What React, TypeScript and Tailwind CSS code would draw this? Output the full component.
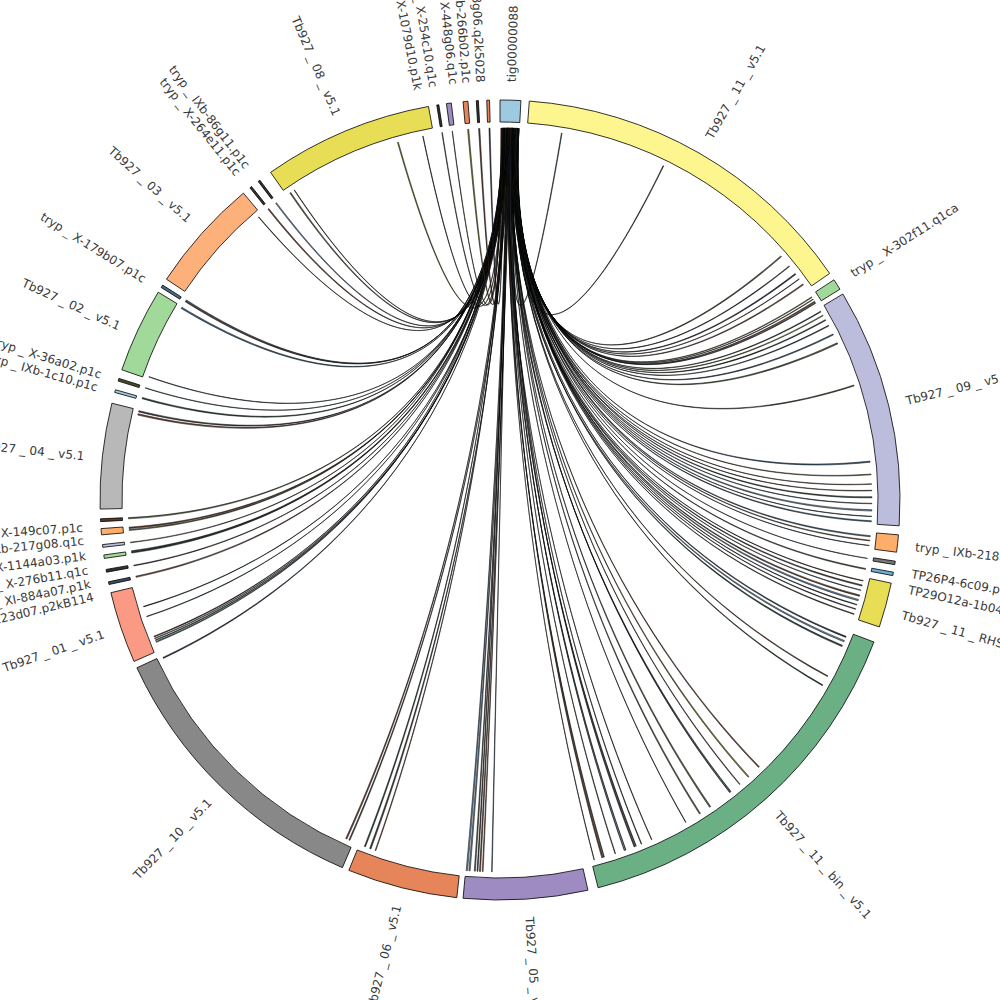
const CX = 500;
const CY = 500;
const R_IN = 378;
const R_OUT = 400;
const R_LINK = 372;
const R_LABEL = 418;

type P = [number, number];

const pt = (r: number, deg: number): P => {
  const a = (deg * Math.PI) / 180;
  return [CX + r * Math.sin(a), CY - r * Math.cos(a)];
};
const f = (p: P) => `${p[0].toFixed(2)} ${p[1].toFixed(2)}`;

function sector(a1: number, a2: number) {
  const large = a2 - a1 > 180 ? 1 : 0;
  return `M${f(pt(R_OUT, a1))} A${R_OUT} ${R_OUT} 0 ${large} 1 ${f(pt(R_OUT, a2))} L${f(pt(R_IN, a2))} A${R_IN} ${R_IN} 0 ${large} 0 ${f(pt(R_IN, a1))}Z`;
}

function ribbon(o: number, ow: number, t: number, tw: number) {
  const a1 = pt(R_LINK, o);
  const a2 = pt(R_LINK, o + ow);
  const b1 = pt(R_LINK, t);
  const b2 = pt(R_LINK, t + tw);
  const c1 = pt(R_LINK * 0.25, o);
  const c2 = pt(R_LINK * 0.5, t);
  const c3 = pt(R_LINK * 0.5, t + tw);
  const c4 = pt(R_LINK * 0.25, o + ow);
  return `M${f(a1)} C${f(c1)} ${f(c2)} ${f(b1)} L${f(b2)} C${f(c3)} ${f(c4)} ${f(a2)}Z`;
}

// ideograms: start, end, fill
const segments: [number, number, string][] = [
  [0, 3, "#9ecae1"],
  [4.2, 55.5, "#fdf68e"],
  [56.6, 58.2, "#a1d99b"],
  [59, 93.7, "#bcbddc"],
  [95, 97.5, "#fdae6b"],
  [98.8, 99.3, "#777777"],
  [100.4, 100.9, "#6baed6"],
  [102, 108.5, "#e8de55"],
  [110.8, 165.8, "#6baf84"],
  [167.3, 185.3, "#9d8bc2"],
  [186.2, 202.2, "#e6855a"],
  [203.2, 245.2, "#888888"],
  [246.2, 256.6, "#fb9a84"],
  [257.8, 258.2, "#3b4b6b"],
  [259.6, 260.0, "#333333"],
  [261.6, 262.1, "#a1d99b"],
  [263.2, 263.6, "#bcbddc"],
  [265.0, 265.9, "#fdae6b"],
  [266.9, 267.3, "#5a3a2a"],
  [268.7, 284.0, "#b8b8b8"],
  [285.6, 286.0, "#9ecae1"],
  [287.3, 287.7, "#4a4a2a"],
  [289.0, 301.3, "#a1d99b"],
  [302.1, 302.5, "#4a6a8a"],
  [303.5, 320.1, "#fdb07a"],
  [321.3, 321.6, "#333333"],
  [322.8, 323.1, "#333333"],
  [325, 349.7, "#e8de55"],
  [350.9, 351.2, "#333333"],
  [352.3, 353.0, "#9d8bc2"],
  [354.7, 355.4, "#e6855a"],
  [356.6, 356.9, "#333333"],
  [358.1, 358.5, "#e6855a"],
];

const labels: [number, string][] = [
  [1.6, "tig00000088"],
  [30, "Tb927_11_v5.1"],
  [57.3, "tryp_X-302f11.q1ca"],
  [76.3, "Tb927_09_v5.1"],
  [96.5, "tryp_IXb-218a05.p1c"],
  [100.2, "TP26P4-6c09.p1k"],
  [102.4, "TP29O12a-1b04.q1k"],
  [106, "Tb927_11_RHS_v5.1"],
  [138.5, "Tb927_11_bin_v5.1"],
  [176, "Tb927_05_v5.1"],
  [194.2, "Tb927_06_v5.1"],
  [224, "Tb927_10_v5.1"],
  [251.3, "Tb927_01_v5.1"],
  [256.6, "TP11-123d07.p2kB114"],
  [258.4, "tryp_XI-884a07.p1k"],
  [260.3, "tryp_X-276b11.q1c"],
  [262.3, "tryp_X-1144a03.p1k"],
  [264.4, "tryp_IXb-217g08.q1c"],
  [266.2, "tryp_X-149c07.p1c"],
  [276, "Tb927_04_v5.1"],
  [285.6, "tryp_IXb-1c10.p1c"],
  [287.4, "tryp_X-36a02.p1c"],
  [294.5, "Tb927_02_v5.1"],
  [301.8, "tryp_X-179b07.p1c"],
  [312, "Tb927_03_v5.1"],
  [321.2, "tryp_X-264e11.p1c"],
  [322.8, "tryp_IXb-86g11.p1c"],
  [337, "Tb927_08_v5.1"],
  [348.7, "tryp_X-1079d10.p1k"],
  [350.8, "tryp_X-254c10.q1c"],
  [353.6, "tryp_X-448g06.q1c"],
  [355.4, "tryp_IXb-266b02.p1c"],
  [357.3, "tryp_IXb-8g06.q2k5028"],
];

// chord target angles, all starting from tig00000088
const targets = [
  9.5, 26, 49, 51, 52.5, 53.5, 54.5,
  56.9, 57.3, 57.7, 58.0,
  59.5, 60.2, 61, 62, 63.5, 65, 72, 84, 86, 87.5, 88.5, 89.5, 90.5, 91.5, 92.5, 93.2,
  95.5, 96.2, 97,
  99, 100.6,
  102.5, 103.2, 104, 104.8, 105.5, 106.3, 107, 107.8,
  111.5, 112.2, 113, 118.2, 119.8, 135.8, 138, 139.8, 141.6, 141.8, 145.5, 147.4, 150,
  155.9, 157.6, 158.5, 158.7, 160.2, 160.4, 161.9, 163.7, 163.9, 165.3,
  181.2, 182.6, 183, 183.4, 183.8, 184.6, 185.0,
  199.5, 200.3, 201.2,
  203.8, 204.3, 244.8,
  247.5, 247.8, 248.1, 248.4, 251.7, 253.3,
  258, 259.8, 261.8, 262.0, 263.4, 265.3, 265.6, 267.1,
  283.2, 283.7, 285.8, 287.5, 289.3,
  301.0, 302.2, 302.4,
  319.5, 321.4, 322.9, 325.6, 326.4, 344, 348,
  351, 352.6, 355, 356.7, 358.3,
];

const palette = [
  "#6b3f2a", "#2f4f3f", "#4a6f8a", "#8a8a3a", "#3b3b5b",
  "#7a4a3a", "#5a6a4a", "#444444", "#9a6a4a", "#6a8aaa",
];

let seed = 7;
const rnd = () => {
  seed = (seed * 16807) % 2147483647;
  return (seed - 1) / 2147483646;
};

const chords = targets.map((t, i) => {
  const n = targets.length;
  const base = 2.8 - (i / (n - 1)) * 2.5;
  const o = Math.min(2.85, Math.max(0.1, base + (rnd() - 0.5) * 0.6));
  const ow = 0.03 + rnd() * 0.05;
  const tw = 0.06 + rnd() * 0.16;
  return {
    d: ribbon(o, ow, t, tw),
    fill: palette[Math.floor(rnd() * palette.length)],
  };
});

const label = (s: string) => s.replace(/_/g, " _ ");

function Label({ angle, text }: { angle: number; text: string }) {
  const [x, y] = pt(R_LABEL, angle);
  const right = angle < 180;
  const rot = right ? angle - 90 : angle + 90;
  return (
    <text
      x={0}
      y={0}
      transform={`translate(${x.toFixed(2)} ${y.toFixed(2)}) rotate(${rot})`}
      textAnchor={right ? "start" : "end"}
      dominantBaseline="central"
      fontSize={12}
      fill="#3a3a3a"
    >
      {label(text)}
    </text>
  );
}

export default function App() {
  return (
    <div className="w-[1000px] h-[1000px] overflow-hidden bg-white font-['DejaVu_Sans',sans-serif]">
      <svg width={1000} height={1000} viewBox="0 0 1000 1000">
        <g stroke="#000000" strokeWidth={0.5} strokeLinejoin="round">
          {chords.map((c, i) => (
            <path key={i} d={c.d} fill={c.fill} />
          ))}
        </g>
        <g stroke="#000000" strokeWidth={0.8}>
          {segments.map(([a1, a2, fill], i) => (
            <path key={i} d={sector(a1, a2)} fill={fill} />
          ))}
        </g>
        <g>
          {labels.map(([a, t]) => (
            <Label key={t} angle={a} text={t} />
          ))}
        </g>
      </svg>
    </div>
  );
}
